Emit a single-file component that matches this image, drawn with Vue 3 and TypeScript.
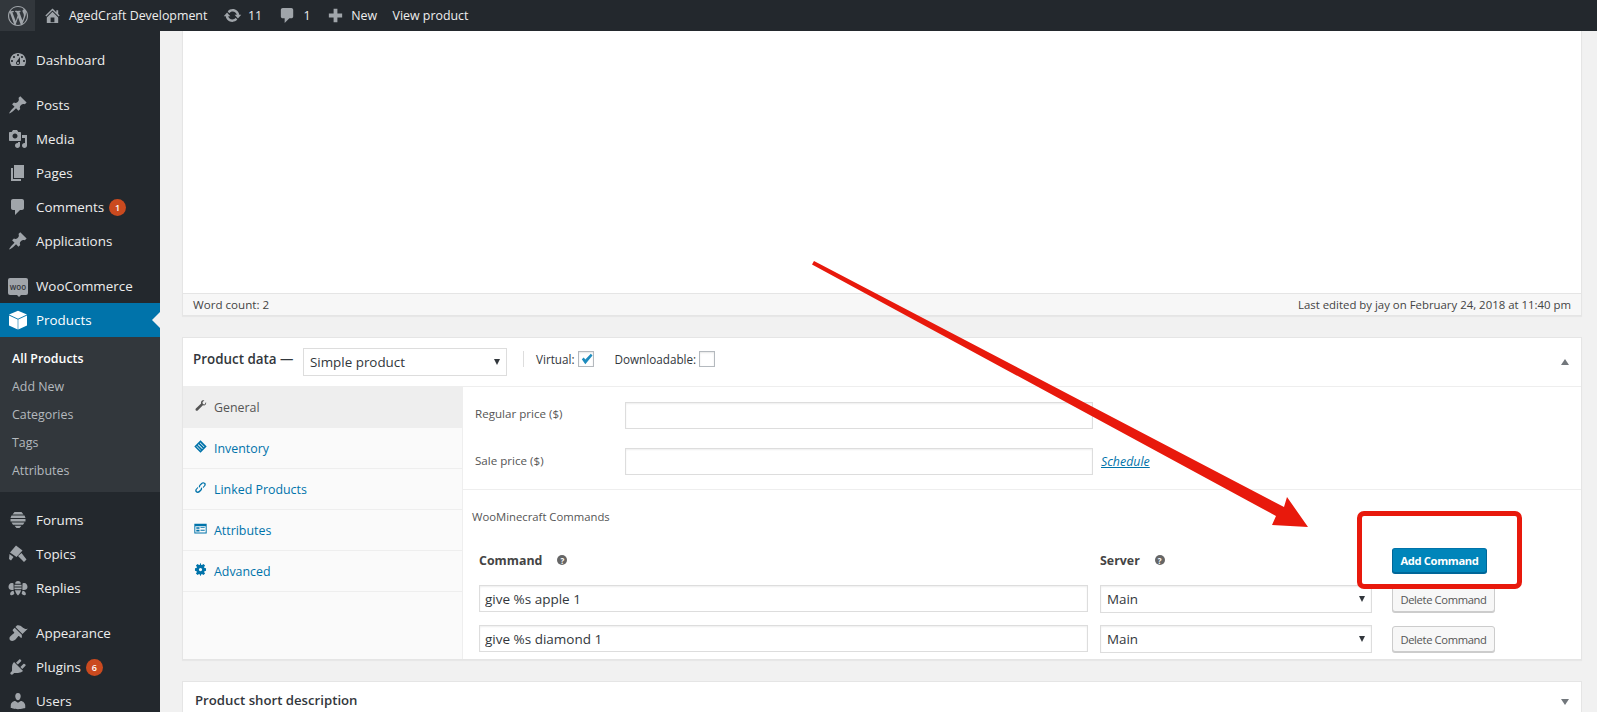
<script setup lang="ts">
interface Item { label: string; icon: string; active?: boolean; badge?: string; woo?: boolean }
const ic: Record<string, string> = {
  dashboard: 'M3.76 16h12.48c1.1-1.37 1.76-3.11 1.76-5 0-4.42-3.58-8-8-8s-8 3.58-8 8c0 1.89.66 3.63 1.76 5zM10 4c.55 0 1 .45 1 1s-.45 1-1 1-1-.45-1-1 .45-1 1-1zM6 6c.55 0 1 .45 1 1s-.45 1-1 1-1-.45-1-1 .45-1 1-1zm8 0c.55 0 1 .45 1 1s-.45 1-1 1-1-.45-1-1 .45-1 1-1zm-5.37 5.55L12 7v6c0 1.1-.9 2-2 2s-2-.9-2-2c0-.57.24-1.08.63-1.45zM4 10c.55 0 1 .45 1 1s-.45 1-1 1-1-.45-1-1 .45-1 1-1zm12 0c.55 0 1 .45 1 1s-.45 1-1 1-1-.45-1-1 .45-1 1-1zm-5 3c0-.55-.45-1-1-1s-1 .45-1 1 .45 1 1 1 1-.45 1-1z',
  post: 'M10.44 3.02l1.82-1.82 6.36 6.35-1.83 1.82c-1.05-.68-2.48-.57-3.41.36l-.75.75c-.92.93-1.04 2.35-.35 3.41l-1.83 1.82-2.41-2.41-2.8 2.79c-.42.42-3.38 2.71-3.8 2.29s1.86-3.39 2.28-3.81l2.79-2.79L4.1 9.36l1.83-1.82c1.05.69 2.48.57 3.4-.36l.75-.75c.93-.92 1.05-2.35.36-3.41z',
  media: 'M13 11V4c0-.55-.45-1-1-1h-1.67L9 1H5L3.67 3H2c-.55 0-1 .45-1 1v7c0 .55.45 1 1 1h10c.55 0 1-.45 1-1zM7 4.5c1.38 0 2.5 1.12 2.5 2.5S8.38 9.5 7 9.5 4.5 8.38 4.5 7 5.62 4.5 7 4.5zM14 6h5v10.5c0 1.38-1.12 2.5-2.5 2.5S14 17.88 14 16.5s1.12-2.5 2.5-2.5c.17 0 .34.02.5.05V9h-3V6zm-4 8.05V13h2v3.5c0 1.38-1.12 2.5-2.5 2.5S7 17.88 7 16.5 8.12 14 9.5 14c.17 0 .34.02.5.05z',
  page: 'M6 15V2h10v13H6zm-1 1h8v2H3V5h2v11z',
  comment: 'M5 2h9c1.1 0 2 .9 2 2v7c0 1.1-.9 2-2 2h-2l-5 5v-5H5c-1.1 0-2-.9-2-2V4c0-1.1.9-2 2-2z',
  box: 'M10 .8l9 3.800-9 4.200-9-4.200zM1 5.500l8.700 4.100v9.900L1 15.500zM19 5.500l-8.700 4.100v9.900l8.700-4z',
  forum: 'M6.500 2h7l2 2.500h-11zM3.500 5.500h13l1 2.500h-15zM2.500 9h15v2.500h-15zM3.500 12.500h13l-1.500 2.200H5zM6.500 15.700h7l-2 2.300h-3z',
  topic: 'M8 1.500l6.500 5-6 6.500L2 8.500zM13.500 9l5 6.500L16 18l-6-6zM1.500 10l4 3L3 16.500 1 15z',
  reply: 'M10 3c1.800 0 2.800 1.100 2.800 2.700H7.200C7.200 4.100 8.200 3 10 3zM6.600 6.800h6.800c.2.600.3 1.200.3 1.800H6.300c0-.6.1-1.200.3-1.800zM6.300 9.600h7.400c0 .6-.1 1.100-.3 1.700H6.600c-.2-.6-.3-1.100-.3-1.700zM6.900 12.300h6.200c-.6 2.200-1.700 3.900-3.100 5.200-1.400-1.300-2.500-3-3.100-5.200zM5.500 5.500C2.500 4 .5 6.500.5 9c0 2.500 2.500 3.600 5.200 2.800zM14.500 5.500c3-1.500 5 1 5 3.500 0 2.500-2.500 3.600-5.200 2.800zM5.500 12.800c-1.800.3-3.400 1.300-3.400 3.100 0 1.300 1.700 1.600 3.200.9l1.100-1.300zM14.500 12.800c1.800.3 3.400 1.300 3.400 3.100 0 1.300-1.700 1.600-3.200.9l-1.100-1.300z',
  appearance: 'M14.48 11.06L7.41 3.99l1.5-1.5c.5-.56 2.3-.47 3.51.32 1.21.8 1.43 1.28 2.91 2.1 1.18.64 2.45 1.26 4.45.85zm-.71.71L6.7 4.7 4.93 6.47c-.39.39-.39 1.02 0 1.41l1.06 1.06c.39.39.39 1.03 0 1.42-.6.6-1.43 1.11-2.21 1.69-.35.26-.7.53-1.01.84C1.43 13.23.91 15.95 2.18 17.22c1.27 1.27 3.99.75 5.33-.6.31-.31.58-.66.84-1.01.58-.78 1.09-1.61 1.69-2.21.39-.39 1.03-.39 1.42 0l1.06 1.06c.39.39 1.02.39 1.41 0z',
  plugin: 'M13.11 4.36L9.87 7.6 8 5.73l3.24-3.24c.35-.34 1.05-.2 1.56.32.52.51.66 1.21.31 1.55zm-8 1.77l.91-1.12 9.01 9.01-1.19.84c-.71.71-2.63 1.16-3.82 1.16H6.14L4.9 17.26c-.59.59-1.54.59-2.12 0-.59-.58-.59-1.53 0-2.12l1.24-1.24v-3.88c0-1.13.4-3.19 1.09-3.89zm7.26 3.97l3.24-3.24c.34-.35 1.04-.21 1.55.31.52.51.66 1.21.31 1.55l-3.24 3.25z',
  users: 'M10 9.25c-2.27 0-2.73-3.44-2.73-3.44C7 4.02 7.82 2 9.97 2c2.16 0 2.98 2.02 2.71 3.81 0 0-.41 3.44-2.68 3.44zm0 2.57L12.72 10c2.39 0 4.52 2.33 4.52 4.53v2.49s-3.65 1.13-7.24 1.13c-3.65 0-7.24-1.13-7.24-1.13v-2.49c0-2.25 1.94-4.48 4.47-4.48z',
  wp: 'M20 10c0-5.51-4.49-10-10-10C4.48 0 0 4.49 0 10c0 5.52 4.48 10 10 10 5.51 0 10-4.48 10-10zM7.78 15.37L4.37 6.22c.55-.02 1.17-.08 1.17-.08.5-.06.44-1.13-.06-1.11 0 0-1.45.11-2.37.11-.18 0-.37 0-.58-.01C4.12 2.69 6.87 1.11 10 1.11c2.33 0 4.45.87 6.05 2.34-.68-.11-1.65.39-1.65 1.58 0 .74.45 1.36.9 2.1.35.61.55 1.36.55 2.46 0 1.49-1.4 5-1.4 5l-3.03-8.37c.54-.02.82-.17.82-.17.5-.05.44-1.25-.06-1.22 0 0-1.44.12-2.38.12-.87 0-2.33-.12-2.33-.12-.5-.03-.56 1.2-.06 1.22l.92.08 1.26 3.41zM17.41 10c.24-.64.74-1.87.43-4.25.7 1.29 1.05 2.71 1.05 4.25 0 3.29-1.73 6.24-4.4 7.78.97-2.59 1.94-5.2 2.92-7.78zM6.1 18.09C3.12 16.65 1.11 13.53 1.11 10c0-1.3.23-2.48.72-3.59C3.25 10.3 4.67 14.2 6.1 18.09zm4.03-6.63l2.58 6.98c-.86.29-1.76.45-2.71.45-.79 0-1.57-.11-2.29-.33.81-2.38 1.62-4.74 2.42-7.1z',
  home: 'M16 8.5l1.53 1.53-1.06 1.06L10 4.62l-6.47 6.47-1.06-1.06L10 2.5l4 4v-2h2v4zm-6-2.46l6 5.99V18H4v-5.97zM12 17v-5H8v5h4z',
  update: 'M10.2 3.28c3.53 0 6.43 2.61 6.92 6h2.08l-3.5 4-3.5-4h2.32c-.45-1.97-2.21-3.45-4.32-3.45-1.45 0-2.73.71-3.54 1.78L4.95 5.66C6.23 4.2 8.11 3.28 10.2 3.28zm-.4 13.44c-3.52 0-6.43-2.61-6.92-6H.8l3.5-4c1.17 1.33 2.33 2.67 3.5 4H5.48c.45 1.97 2.21 3.45 4.32 3.45 1.45 0 2.73-.71 3.54-1.78l1.71 1.95c-1.28 1.46-3.15 2.38-5.25 2.38z',
  plus: 'M17 8v4h-5v5H8v-5H3V8h5V3h4v5z',
  wrench: 'M18.500 4.500c.6 2-.1 4.200-2 5-.9.4-1.900.4-2.800.1l-8 8c-.8.8-2.100.8-2.800 0-.8-.8-.8-2 0-2.800l8-8c-.3-.9-.3-1.800.1-2.700.8-1.900 3-2.600 5-2l-3 3 .7 2.600 2.600.7z',
  tag: 'M10 .5L19.500 10 10 19.500.5 10zM6 7.500L12.500 14l1-1L7 6.500zM8.800 4.700L15.300 11.200l.7-.7L9.500 4zM3.700 10L10 16.300l.7-.7L4.400 9.300z',
  link: 'M17 3c-1.700-1.700-4.200-1.500-5.800.1L8.600 5.700c-1.300 1.300-1.500 3.200-.6 4.700l1.500-1.500c-.2-.6 0-1.300.5-1.800l2.600-2.600c.8-.8 2-.9 2.900-.1.800.9.700 2.100-.1 2.900l-1.800 1.800c.2.700.2 1.400.1 2.100l3.100-3.100c1.600-1.600 1.800-4.100.2-5.500zM12 9.600l-1.500 1.500c.2.600 0 1.300-.5 1.800l-2.600 2.600c-.8.8-2 .9-2.900.1-.8-.9-.7-2.100.1-2.900l1.800-1.800c-.2-.7-.2-1.400-.1-2.100l-3.100 3.100c-1.600 1.600-1.800 4.100-.2 5.500 1.700 1.700 4.200 1.500 5.800-.1l2.600-2.600c1.300-1.300 1.500-3.200.6-4.700z',
  table: 'M.5 2.500h19v15H.5zM2 6.500v9.500h16V6.500zM3.500 8h5v2.500h-5zM10 8h6.500v1.300H10zM3.500 12h5v2.500h-5zM10 12h6.500v1.300H10z',
  gear: 'M18.500 12V8l-2.500-.5c-.1-.5-.3-.9-.5-1.300L17 4 14.500 1.500 12.300 3c-.4-.2-.8-.4-1.300-.5L10.500.5h-1l-.5 2c-.5.1-.9.3-1.300.5L5.500 1.500 3 4l1.500 2.200c-.2.4-.4.8-.5 1.300L1.500 8v4l2.500.5c.1.500.3.900.5 1.300L3 16l2.500 2.500 2.200-1.500c.4.200.8.400 1.300.5l.5 2h1l.5-2c.5-.1.9-.3 1.300-.5l2.200 1.500L17 16l-1.500-2.200c.2-.4.4-.8.5-1.300zM10 12.500a2.500 2.500 0 110-5 2.500 2.500 0 010 5z',
}
const groups: Item[][] = [
  [{ label: 'Dashboard', icon: 'dashboard' }],
  [
    { label: 'Posts', icon: 'post' },
    { label: 'Media', icon: 'media' },
    { label: 'Pages', icon: 'page' },
    { label: 'Comments', icon: 'comment', badge: '1' },
    { label: 'Applications', icon: 'post' },
  ],
  [
    { label: 'WooCommerce', icon: '', woo: true },
    { label: 'Products', icon: 'box', active: true },
  ],
  [
    { label: 'Forums', icon: 'forum' },
    { label: 'Topics', icon: 'topic' },
    { label: 'Replies', icon: 'reply' },
  ],
  [
    { label: 'Appearance', icon: 'appearance' },
    { label: 'Plugins', icon: 'plugin', badge: '6' },
    { label: 'Users', icon: 'users' },
  ],
]
const subs = ['All Products', 'Add New', 'Categories', 'Tags', 'Attributes']
const tabs = [
  { label: 'General', icon: 'wrench', active: true },
  { label: 'Inventory', icon: 'tag' },
  { label: 'Linked Products', icon: 'link' },
  { label: 'Attributes', icon: 'table' },
  { label: 'Advanced', icon: 'gear' },
]
const commands = ['give %s apple 1', 'give %s diamond 1']
</script>

<template>
  <div class="root">
    <header class="topbar">
      <div class="wp-tile"><svg class="wp-logo" viewBox="0 0 20 20"><path :d="ic.wp" /></svg></div>
      <div class="tb-item"><svg class="tb-ic" viewBox="0 0 20 20"><path :d="ic.home" /></svg><span>AgedCraft Development</span></div>
      <div class="tb-item tight"><svg class="tb-ic" viewBox="0 0 20 20"><path :d="ic.update" /></svg><span>11</span></div>
      <div class="tb-item"><svg class="tb-ic" viewBox="0 0 20 20"><path :d="ic.comment" /></svg><span>1</span></div>
      <div class="tb-item tight"><svg class="tb-ic" viewBox="0 0 20 20"><path :d="ic.plus" /></svg><span>New</span></div>
      <div class="tb-item"><span>View product</span></div>
    </header>
    <div class="body">
      <aside class="sidebar">
        <div v-for="(g, gi) in groups" :key="gi" class="group">
          <template v-for="it in g" :key="it.label">
            <div class="mi" :class="{ active: it.active }">
              <span v-if="it.woo" class="woo"><span>woo</span></span>
              <svg v-else class="mi-ic" viewBox="0 0 20 20"><path :d="ic[it.icon]" fill-rule="evenodd" /></svg>
              <span class="mi-label">{{ it.label }}</span>
              <span v-if="it.badge" class="badge">{{ it.badge }}</span>
            </div>
            <div v-if="it.active" class="submenu">
              <div v-for="(s, i) in subs" :key="s" class="si" :class="{ cur: i === 0 }">{{ s }}</div>
            </div>
          </template>
        </div>
      </aside>
      <main class="main">
        <section class="editor">
          <div class="editor-area"></div>
          <div class="status">
            <span>Word count: 2</span>
            <span class="edited">Last edited by jay on February 24, 2018 at 11:40 pm</span>
          </div>
        </section>
        <section class="pd">
          <div class="pd-head">
            <span class="pd-title raise">Product data —</span>
            <div class="select type"><span>Simple product</span><i class="caret"></i></div>
            <span class="sep raise"></span>
            <label class="chk-label raise">Virtual:<span class="chk"><svg viewBox="0 0 14 14"><path d="M2.800 7.300l2-1.800 1.500 2 5.500-5.700 1.700 1.700-7.200 8.800z" /></svg></span></label>
            <label class="chk-label dl raise">Downloadable:<span class="chk"></span></label>
            <i class="toggle up"></i>
          </div>
          <div class="pd-body">
            <nav class="tabs">
              <div v-for="t in tabs" :key="t.label" class="tab" :class="{ on: t.active }">
                <svg class="tab-ic" viewBox="0 0 20 20"><path :d="ic[t.icon]" fill-rule="evenodd" /></svg>
                <span>{{ t.label }}</span>
              </div>
            </nav>
            <div class="panel">
              <div class="prices">
                <div class="field"><span class="flabel">Regular price ($)</span><input class="inp price" /></div>
                <div class="field"><span class="flabel sale">Sale price ($)</span><input class="inp price" /><a class="sched">Schedule</a></div>
              </div>
              <div class="cmds">
                <div class="cmds-title">WooMinecraft Commands</div>
                <div class="grid">
                  <div class="th">Command<span class="help">?</span></div>
                  <div class="th">Server<span class="help">?</span></div>
                  <div class="th-btn"><button class="btn primary">Add Command</button></div>
                  <template v-for="c in commands" :key="c">
                    <input class="inp cmd" :value="c" />
                    <div class="select srv"><span>Main</span><i class="caret"></i></div>
                    <div><button class="btn">Delete Command</button></div>
                  </template>
                </div>
              </div>
            </div>
          </div>
        </section>
        <section class="short">
          <span>Product short description</span>
          <i class="toggle"></i>
        </section>
      </main>
    </div>
    <svg class="arrow" viewBox="0 0 1597 712" width="1597" height="712">
      <polygon points="814,261 1284,507 1287,497 1308,527 1272,525 1276,516 812,264.500" fill="#e8190c" />
    </svg>
    <div class="redbox"></div>
  </div>
</template>

<style>
html, body { margin: 0; padding: 0; background: #f1f1f1; overflow: hidden; }
</style>

<style scoped>
* { box-sizing: border-box; }
.root {
  position: relative; width: 1597px; height: 712px; overflow: hidden;
  display: flex; flex-direction: column; background: #f1f1f1; color: #444;
  font-family: "Open Sans", "Noto Sans", sans-serif; font-size: 13px;
}
.topbar { height: 31px; flex: none; background: #23282d; display: flex; align-items: center; color: #eee; font-size: 12.4px; }
.wp-tile { width: 35px; height: 31px; background: #32373c; display: flex; align-items: center; justify-content: center; }
.wp-logo { width: 20px; height: 20px; fill: #a0a5aa; }
.tb-item { display: flex; align-items: center; gap: 7px; padding: 0 7.500px 0 8px; height: 31px; white-space: nowrap; }
.tb-item.tight { gap: 6px; }
.tb-ic { width: 19px; height: 19px; fill: #a0a5aa; flex: none; }
.body { flex: 1; display: flex; min-height: 0; }
.sidebar { width: 160px; flex: none; background: #23282d; padding-top: 12px; }
.group { margin-bottom: 11px; }
.mi { height: 34px; display: flex; align-items: center; color: #eee; font-size: 13.4px; position: relative; }
.mi-ic { width: 20px; height: 20px; margin-left: 8px; fill: #a0a5aa; flex: none; }
.mi-label { margin-left: 8px; white-space: nowrap; }
.mi.active { background: #0073aa; color: #fff; }
.mi.active .mi-ic { fill: #fff; }
.mi.active::after {
  content: ""; position: absolute; right: 0; top: 9px;
  border: 8px solid transparent; border-right-color: #f1f1f1; border-left-width: 0;
}
.woo { position: relative; width: 20px; height: 17px; margin-left: 8px; background: #a0a5aa; border-radius: 2px; color: #32373c; display: flex; align-items: center; justify-content: center; font-size: 8px; font-weight: 600; flex: none; }
.woo::after { content: ""; position: absolute; left: 9px; bottom: -2px; border: 2px solid transparent; border-top-color: #a0a5aa; border-bottom: 0; }
.badge { margin-left: 5px; width: 17px; height: 17px; border-radius: 50%; background: #ca4a1f; color: #fff; font-size: 9px; font-weight: 600; display: flex; align-items: center; justify-content: center; }
.submenu { background: #32373c; padding: 7px 0 8px; }
.si { height: 28px; display: flex; align-items: center; padding-left: 12px; font-size: 12.4px; color: #b4b9be; }
.si.cur { color: #fff; font-weight: 600; }
.main { flex: 1; min-width: 0; padding: 0 15px 0 22px; }
.editor { background: #fff; border: 1px solid #e5e5e5; border-top: 0; box-shadow: 0 1px 1px rgba(0,0,0,.04); margin-bottom: 21px; }
.editor-area { height: 262px; }
.status { height: 22px; border-top: 1px solid #e5e5e5; background: #f7f7f7; display: flex; align-items: center; justify-content: space-between; padding: 0 10px; font-size: 11.6px; color: #444; }
.edited { font-size: 11.4px; }
.pd { height: 323px; background: #fff; border: 1px solid #e5e5e5; box-shadow: 0 1px 1px rgba(0,0,0,.04); margin-bottom: 21px; display: flex; flex-direction: column; }
.pd-head { height: 49px; flex: none; display: flex; align-items: center; padding-left: 10px; border-bottom: 1px solid #eee; position: relative; }
.raise { margin-bottom: 6px; }
.pd-title { font-size: 13.4px; font-weight: 600; color: #32373c; width: 110px; white-space: nowrap; }
.select { border: 1px solid #ddd; background: #fff; display: flex; align-items: center; justify-content: space-between; padding: 0 6px; font-size: 13.4px; color: #32373c; position: relative; }
.select.type { width: 204px; height: 28px; }
.select.srv { width: 272px; height: 28px; box-shadow: inset 0 1px 2px rgba(0,0,0,.07); }
.caret { width: 0; height: 0; border: 3.500px solid transparent; border-top: 6px solid #32373c; border-bottom: 0; }
.sep { width: 1px; height: 16px; background: #ddd; margin-left: 16px; margin-right: 12px; }
.chk-label { display: flex; align-items: center; gap: 3px; font-size: 11.7px; color: #32373c; white-space: nowrap; }
.chk-label.dl { margin-left: 21px; }
.chk { width: 16px; height: 16px; border: 1px solid #b4b9be; background: #fff; display: inline-flex; box-shadow: inset 0 1px 2px rgba(0,0,0,.1); }
.chk svg { width: 14px; height: 14px; fill: #1e8cbe; }
.toggle { position: absolute; right: 12px; top: 50%; width: 0; height: 0; margin-top: -3px; border: 4px solid transparent; border-top: 6px solid #72777c; border-bottom: 0; }
.toggle.up { border-top: 0; border-bottom: 6px solid #72777c; }
.pd-body { flex: 1; display: flex; min-height: 0; }
.tabs { width: 280px; flex: none; background: #fafafa; border-right: 1px solid #eee; }
.tab { height: 41px; padding-left: 11px; display: flex; align-items: center; gap: 7px; border-bottom: 1px solid #eee; color: #0073aa; font-size: 12.4px; }
.tab-ic { width: 13px; height: 13px; fill: #0073aa; flex: none; margin-top: -3px; }
.tab.on { background: #eee; color: #555; }
.tab.on .tab-ic { fill: #555; }
.panel { flex: 1; min-width: 0; }
.prices { height: 103px; padding: 15px 0 0 12px; border-bottom: 1px solid #eee; display: flex; flex-direction: column; gap: 19px; }
.field { display: flex; align-items: center; }
.flabel { width: 150px; font-size: 11.6px; color: #555; white-space: nowrap; margin-bottom: 4px; }
.flabel.sale { margin-bottom: 2px; }
.inp { border: 1px solid #ddd; background: #fff; box-shadow: inset 0 1px 2px rgba(0,0,0,.07); outline: none; height: 27px; padding: 0 5px; font: inherit; font-size: 13.5px; color: #32373c; }
.inp.price { width: 468px; }
.sched { margin-left: 8px; font-size: 12.4px; font-style: italic; color: #0073aa; text-decoration: underline; }
.cmds { padding: 18px 0 0 9px; }
.cmds-title { font-size: 11.3px; color: #555; line-height: 18px; }
.grid { margin: 23px 0 0 7px; display: grid; grid-template-columns: 609px 272px auto; column-gap: 12px; row-gap: 12px; align-items: start; }
.grid > :nth-child(3n) { margin-left: 8px; }
.th { font-weight: 700; font-size: 12.4px; color: #444; display: flex; align-items: center; height: 24px; padding-bottom: 2px; }
.th-btn { height: 24px; }
.help { width: 10px; height: 10px; border-radius: 50%; background: #666; color: #fff; font-size: 8px; font-weight: 700; display: inline-flex; align-items: center; justify-content: center; margin-left: 15px; }
.btn { display: block; height: 26px; width: 103px; margin-top: 1px; padding: 0; border: 1px solid #ccc; border-radius: 3px; background: #f7f7f7; box-shadow: 0 1px 0 #ccc; font: inherit; font-size: 11.2px; letter-spacing: -.35px; color: #555; white-space: nowrap; }
.btn.primary { width: 95px; height: 25px; margin-top: -1px; background: #0085ba; border-color: #0073aa #006799 #006799; box-shadow: 0 1px 0 #006799; color: #fff; font-weight: 700; }
.short { height: 60px; background: #fff; border: 1px solid #e5e5e5; position: relative; padding: 9px 12px 0; display: flex; align-items: flex-start; font-size: 13.2px; font-weight: 600; color: #32373c; }
.short .toggle { top: 20px; }
.arrow { position: absolute; left: 0; top: 0; pointer-events: none; }
.redbox { position: absolute; left: 1357px; top: 511px; width: 165px; height: 78px; border: 5px solid #e8190c; border-radius: 7px; pointer-events: none; }
</style>
